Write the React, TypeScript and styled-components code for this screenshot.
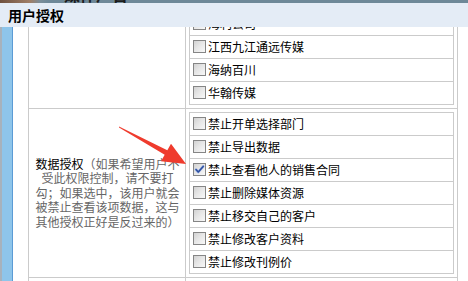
import React from 'react'
import styled, { createGlobalStyle } from 'styled-components'

const GlobalStyle = createGlobalStyle`
  html, body {
    margin: 0;
    padding: 0;
  }
  body {
    width: 468px;
    height: 281px;
    overflow: hidden;
    background: #fff;
    color: #000;
    font-family: "Noto Sans CJK SC", "Liberation Sans", sans-serif;
    font-size: 12px;
  }
`

const Page = styled.div`
  position: relative;
  display: flex;
  flex-direction: column;
  width: 468px;
  height: 281px;
  overflow: hidden;
`

const TopStrip = styled.div`
  height: 3px;
  flex: none;
  overflow: hidden;
  padding-left: 64px;
  background: linear-gradient(
    90deg,
    #6f5140 0,
    #a07e66 30px,
    #7b8e99 40px,
    #6e8898 48px,
    #6e8898 100%
  );
`

const StripText = styled.div`
  margin-top: -15px;
  font-size: 16px;
  font-weight: bold;
  line-height: 18px;
  color: #1c1c1c;
`

const TitleBar = styled.div`
  height: 24px;
  flex: none;
  display: flex;
  align-items: center;
  padding-left: 8px;
  background: #e4ecf6;
  font-size: 14px;
  font-weight: bold;
  color: #000;
`

const Body = styled.div`
  flex: 1;
  min-height: 0;
  display: flex;
`

const SideRail = styled.div`
  width: 10px;
  flex: none;
  background: #8ec5ea;
  border-left: 2px solid #a7b2bc;
  border-right: 1px solid #5b9bd5;
`

const Content = styled.div`
  flex: 1;
  padding-left: 15px;
  overflow: hidden;
`

const Sheet = styled.div`
  margin-top: -19px;
  display: grid;
  grid-template-columns: 157px 272px;
  width: 429px;
  border-left: 1px solid #cbcbcb;
  border-top: 1px solid #cbcbcb;
`

const LabelCell = styled.div`
  box-sizing: border-box;
  display: flex;
  align-items: center;
  justify-content: center;
  padding: 0 5px 0 6px;
  border-right: 1px solid #cbcbcb;
  border-bottom: 1px solid #cbcbcb;
  text-align: center;
  line-height: 14.5px;
  font-size: 12px;
`

const Hint = styled.span`
  color: #666;
`

const OptionCell = styled.div`
  box-sizing: border-box;
  padding: 3px;
  border-right: 1px solid #cbcbcb;
  border-bottom: 1px solid #cbcbcb;
`

const OptionList = styled.div`
  border: 1px solid #cbcbcb;
  border-bottom: none;
`

const OptionRow = styled.label`
  display: flex;
  align-items: center;
  height: 22px;
  padding-left: 3px;
  border-bottom: 1px solid #cbcbcb;
`

const Box = styled.span`
  box-sizing: border-box;
  width: 13px;
  height: 13px;
  flex: none;
  margin: -2px 2px 0 0;
  display: flex;
  align-items: center;
  justify-content: center;
  border: 1px solid #858585;
  background: linear-gradient(135deg, #d2d2d2 0%, #e6e6e6 45%, #f8f8f8 100%);
`

const OptionText = styled.span`
  line-height: 14px;
  white-space: nowrap;
`

const ArrowLayer = styled.svg`
  position: absolute;
  left: 0;
  top: 0;
  width: 468px;
  height: 281px;
  pointer-events: none;
`

const companies = ['海利公司', '江西九江通远传媒', '海纳百川', '华翰传媒']

const dataRules = [
  { name: '禁止开单选择部门', checked: false },
  { name: '禁止导出数据', checked: false },
  { name: '禁止查看他人的销售合同', checked: true },
  { name: '禁止删除媒体资源', checked: false },
  { name: '禁止移交自己的客户', checked: false },
  { name: '禁止修改客户资料', checked: false },
  { name: '禁止修改刊例价', checked: false },
]

const moreRules = ['禁止查看财务报表', '禁止修改合同金额']

const Checkbox = ({ checked }: { checked?: boolean }) => (
  <Box>
    {checked && (
      <svg width="11" height="11" viewBox="0 0 11 11">
        <path
          d="M2 5.6 L4.3 8 L9.2 2.4"
          fill="none"
          stroke="#9fb4e6"
          strokeWidth="2.6"
          strokeLinecap="round"
          strokeLinejoin="round"
        />
        <path
          d="M2 5.6 L4.3 8 L9.2 2.4"
          fill="none"
          stroke="#2d4f9e"
          strokeWidth="1.5"
          strokeLinecap="round"
          strokeLinejoin="round"
        />
      </svg>
    )}
  </Box>
)

const Option = ({ name, checked }: { name: string; checked?: boolean }) => (
  <OptionRow>
    <Checkbox checked={checked} />
    <OptionText>{name}</OptionText>
  </OptionRow>
)

export default function App() {
  return (
    <>
      <GlobalStyle />
      <Page>
        <TopStrip>
          <StripText>媒体广告</StripText>
        </TopStrip>
        <TitleBar>用户授权</TitleBar>
        <Body>
          <SideRail />
          <Content>
            <Sheet>
              <LabelCell />
              <OptionCell>
                <OptionList>
                  {companies.map((c) => (
                    <Option key={c} name={c} />
                  ))}
                </OptionList>
              </OptionCell>

              <LabelCell>
                <div>
                  数据授权
                  <Hint>
                    （如果希望用户不受此权限控制，请不要打勾；如果选中，该用户就会被禁止查看该项数据，这与其他授权正好是反过来的）
                  </Hint>
                </div>
              </LabelCell>
              <OptionCell>
                <OptionList>
                  {dataRules.map((r) => (
                    <Option key={r.name} name={r.name} checked={r.checked} />
                  ))}
                </OptionList>
              </OptionCell>

              <LabelCell />
              <OptionCell>
                <OptionList>
                  {moreRules.map((r) => (
                    <Option key={r} name={r} />
                  ))}
                </OptionList>
              </OptionCell>
            </Sheet>
          </Content>
        </Body>
        <ArrowLayer viewBox="0 0 468 281">
          <polygon
            points="119,126.4 167.3,150.2 171,143.8 186,164 161,161.2 164.7,154.8 119,127.6"
            fill="#ef3b2d"
          />
        </ArrowLayer>
      </Page>
    </>
  )
}
